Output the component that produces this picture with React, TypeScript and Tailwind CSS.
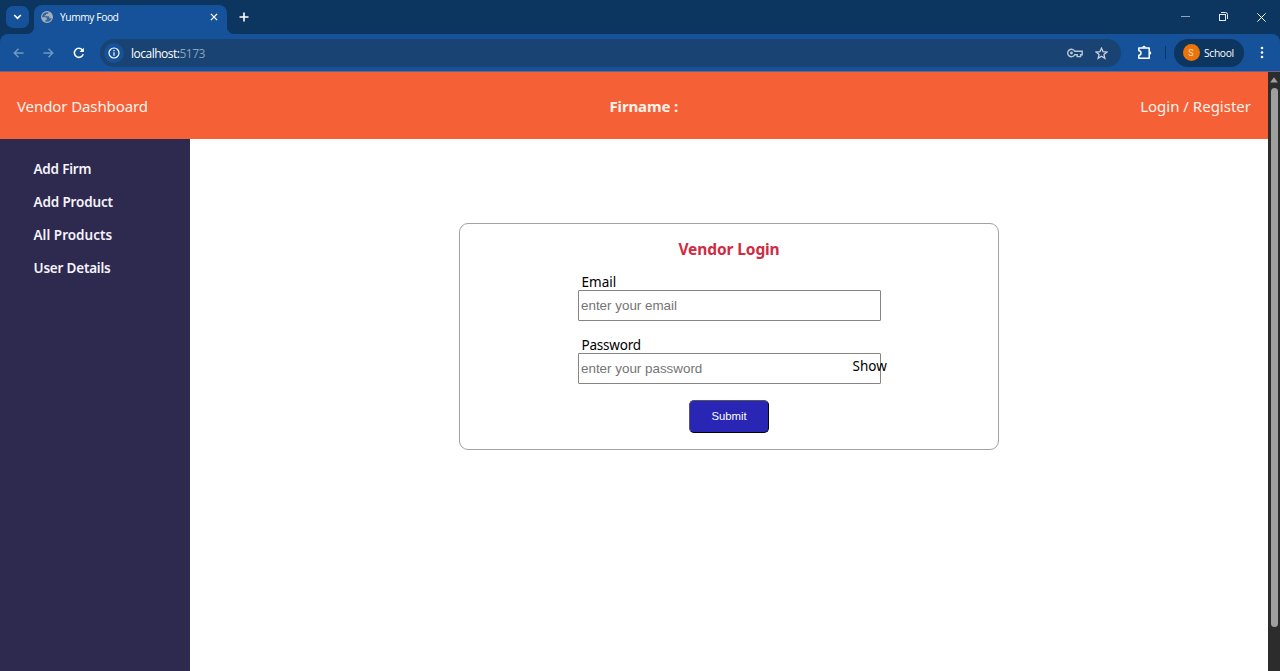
import React from "react";

const menuItems = [
  { label: "Add Firm", spacing: "tracking-[-0.2px]" },
  { label: "Add Product", spacing: "tracking-[-0.15px]" },
  { label: "All Products", spacing: "tracking-[0.02px]" },
  { label: "User Details", spacing: "tracking-[-0.2px]" },
];

function TitleBar() {
  return (
    <div className="flex h-[34px] shrink-0 items-start bg-[#0c3560] text-white">
      <div className="ml-[6px] mt-[6px] flex h-[22px] w-[23px] items-center justify-center rounded-[7px] bg-[#15529a]">
        <svg width="9" height="6" viewBox="0 0 9 6" fill="none" stroke="currentColor" strokeWidth="1.7">
          <path d="M1.2 1 4.5 4.3 7.8 1" />
        </svg>
      </div>
      <div className="relative ml-[5px] mt-[5px] flex h-[29px] w-[193px] items-center rounded-t-[8px] bg-[#15529a] pb-[5px]">
        <svg className="absolute -left-[7px] bottom-0" width="7" height="7" viewBox="0 0 7 7" fill="#15529a">
          <path d="M7 0A7 7 0 0 1 0 7H7Z" />
        </svg>
        <svg className="absolute -right-[7px] bottom-0" width="7" height="7" viewBox="0 0 7 7" fill="#15529a">
          <path d="M0 0A7 7 0 0 0 7 7H0Z" />
        </svg>
        <svg className="ml-[7px]" width="12" height="12" viewBox="0 0 12 12">
          <circle cx="6" cy="6" r="5.4" fill="#31669f" stroke="#a5afb9" strokeWidth="1.1" />
          <path d="M.7 6.2h3.2c1.3 0 2 .7 2 1.7v.8h-1.500v2.400C2.200 10.600.7 8.700.7 6.200ZM7.600.8v.8c0 .8-.7 1.400-1.500 1.400H5v1.200H3.800v1h3.300c.8 0 1.300.5 1.300 1.200v.9h2.700C11.800 4.300 10.200 1.500 7.600.8Z" fill="#a5afb9" />
        </svg>
        <span className="ml-[7px] grow whitespace-nowrap font-['Open_Sans','Noto_Sans',sans-serif] text-[10.3px] leading-4 tracking-[-0.45px]">Yummy Food</span>
        <svg className="mr-[9px]" width="8" height="8" viewBox="0 0 8 8" stroke="currentColor" strokeWidth="1.3">
          <path d="m.9.9 6.200 6.200M7.100.9.9 7.100" />
        </svg>
      </div>
      <svg className="ml-[12px] mt-[12px]" width="10" height="10" viewBox="0 0 10 10" stroke="currentColor" strokeWidth="1.6">
        <path d="M5 .5v9M.5 5h9" />
      </svg>
      <div className="ml-auto mr-[14px] mt-[12px] flex items-center">
        <svg width="9" height="9" viewBox="0 0 9 9" stroke="#91a6bd" strokeWidth="1">
          <path d="M0 3.500h9" />
        </svg>
        <svg className="ml-[28px]" width="10" height="10" viewBox="0 0 10 10" fill="none" stroke="#e2eaf2" strokeWidth="1">
          <rect x="1.500" y="2.500" width="6" height="6" />
          <path d="M3 .5H7.500a2 2 0 0 1 2 2v4.500" />
        </svg>
        <svg className="ml-[29px]" width="9" height="9" viewBox="0 0 9 9" stroke="currentColor" strokeWidth="1">
          <path d="m.4.4 8.200 8.200M8.600.4.4 8.600" />
        </svg>
      </div>
    </div>
  );
}

function Toolbar() {
  return (
    <div className="h-[38px] shrink-0 bg-[#0c3560]">
      <div className="flex h-full items-center rounded-t-[8px] border-b border-[#6f6485] bg-[#15529a] text-white">
        <svg className="ml-[13px]" width="11" height="10" viewBox="0 0 11 10" fill="none" stroke="#7398c4" strokeWidth="1.400">
          <path d="M10.500 5H1.200M5.500.7 1.200 5l4.300 4.300" />
        </svg>
        <svg className="ml-[19px]" width="11" height="10" viewBox="0 0 11 10" fill="none" stroke="#7398c4" strokeWidth="1.400">
          <path d="M.5 5h9.300M5.500.7 9.800 5 5.500 9.300" />
        </svg>
        <svg className="ml-[19px]" width="12" height="12" viewBox="0 0 12 12" fill="none">
          <path d="M10.200 7.200A4.500 4.500 0 1 1 9.300 2.900L10.500 4" stroke="currentColor" strokeWidth="1.500" />
          <path d="M10.800.7v4.300H6.500Z" fill="currentColor" />
        </svg>
        <div className="ml-[15px] flex h-[28px] w-[1021px] items-center rounded-full bg-[#194372] pl-[4px]">
          <div className="flex h-[20px] w-[20px] items-center justify-center rounded-full bg-[#15529a]">
            <svg width="12" height="12" viewBox="0 0 12 12" fill="none" stroke="currentColor" strokeWidth="1.200">
              <circle cx="6" cy="6" r="5" />
              <path d="M6 5.300v3.400M6 3v1.300" />
            </svg>
          </div>
          <span className="ml-[7px] mt-[2px] whitespace-nowrap font-['Open_Sans','Noto_Sans',sans-serif] text-[12px] leading-4 tracking-[-0.5px]">
            localhost:<span className="text-[#89a2bd]">5173</span>
          </span>
          <svg className="ml-auto mt-px" width="16" height="10" viewBox="0 0 16 10" fill="none" stroke="#b9c7d7" strokeWidth="1.400">
            <path d="M7.700 3.300A3.700 3.700 0 1 0 7.700 6.700H10.200V8.600H13.600V6.700H15.200V3.300Z" />
            <circle cx="4.500" cy="5" r="1.400" fill="#b9c7d7" stroke="none" />
          </svg>
          <svg className="ml-[12px] mr-[13px] mt-px" width="13" height="13" viewBox="0 0 13 13" fill="none" stroke="#c7d3e0" strokeWidth="1.300">
            <path d="m6.500 1.200 1.550 3.500 3.800.35-2.900 2.500.9 3.750-3.350-2-3.350 2 .9-3.750-2.900-2.500 3.800-.35Z" />
          </svg>
        </div>
        <svg className="ml-[16px]" width="15" height="15" viewBox="0 0 15 15" fill="none" stroke="currentColor" strokeWidth="1.500">
          <path d="M1.800 2.900h10.400v10.300H1.800V10.200a2.200 2.200 0 0 0 0-4.400Z" strokeLinejoin="round" />
          <path d="M5.200 2.600a1.800 1.800 0 0 1 3.600 0ZM12.500 6.200a1.800 1.800 0 0 1 0 3.600Z" fill="currentColor" stroke="none" />
        </svg>
        <div className="ml-[13px] h-[13px] w-px bg-[#0c3560]" />
        <div className="ml-[8px] flex h-[28px] w-[70px] items-center rounded-full bg-[#0c3560] pl-[8.500px]">
          <div className="flex h-[17px] w-[17px] shrink-0 items-center justify-center rounded-full bg-[#ec7409] pt-px font-['Roboto',sans-serif] text-[9px] leading-none text-[#f8dcc0]">S</div>
          <span className="ml-[4.500px] font-['Open_Sans','Noto_Sans',sans-serif] text-[10.300px] font-medium leading-4 tracking-[-0.35px]">School</span>
        </div>
        <svg className="ml-[16px]" width="4" height="13" viewBox="0 0 4 13" fill="currentColor">
          <circle cx="2" cy="2" r="1.300" />
          <circle cx="2" cy="6.500" r="1.300" />
          <circle cx="2" cy="11" r="1.300" />
        </svg>
      </div>
    </div>
  );
}

function LoginForm() {
  return (
    <form
      onSubmit={(event) => event.preventDefault()}
      className="ml-[269px] mt-[84px] flex h-[227px] w-[540px] flex-col items-center rounded-[9px] border border-[#a2a2a2] bg-white"
    >
      <h3 className="mt-[13px] text-[15.500px] font-bold leading-6 tracking-[-0.1px] text-[#cf2c43]">Vendor Login</h3>
      <div className="mt-[11px] w-[302px]">
        <label htmlFor="email" className="block pl-[3.500px] pt-[2px] text-[13.500px] leading-[16px]">Email</label>
        <input
          id="email"
          type="text"
          placeholder="enter your email"
          className="block h-[31px] w-[303px] rounded-[1px] border border-[#858585] pl-[2px] font-['Liberation_Sans',sans-serif] text-[13.400px] placeholder:text-[#757575]"
        />
      </div>
      <div className="relative mt-[14px] w-[302px]">
        <label htmlFor="password" className="block pl-[3.500px] pt-[2px] text-[13.500px] leading-[16px] tracking-[-0.2px]">Password</label>
        <input
          id="password"
          type="password"
          placeholder="enter your password"
          className="block h-[31px] w-[303px] rounded-[1px] border border-[#858585] pl-[2px] font-['Liberation_Sans',sans-serif] text-[13.400px] placeholder:text-[#757575]"
        />
        <span className="absolute left-[274.500px] top-[22px] text-[13.500px] leading-[18px]">Show</span>
      </div>
      <button className="mt-[16px] h-[33px] w-[80px] rounded-[5px] border border-b-[#000] border-l-[#555568] border-r-[#000] border-t-[#555568] bg-[#2926b5] font-['Liberation_Sans',sans-serif] text-[11.300px] text-white">Submit</button>
    </form>
  );
}

export default function App() {
  return (
    <div className="flex h-[671px] w-[1280px] flex-col overflow-hidden bg-white font-['Noto_Sans',sans-serif] text-black">
      <TitleBar />
      <Toolbar />
      <div className="flex min-h-0 grow">
        <div className="flex w-[1268px] flex-col">
          <header className="grid h-[67px] shrink-0 grid-cols-[592.500px_100px_1fr] items-center bg-[#f56036] px-[17px] text-[15px] leading-6 text-[#fff3ec]">
            <span className="tracking-[-0.1px]">Vendor Dashboard</span>
            <span className="whitespace-nowrap font-bold tracking-[-0.15px]">Firname :</span>
            <span className="text-right">Login / Register</span>
          </header>
          <div className="flex min-h-0 grow">
            <nav className="w-[190px] shrink-0 bg-[#2e294e] pl-[33.500px] pt-[14px]">
              <ul>
                {menuItems.map((item) => (
                  <li key={item.label} className="flex h-[32.800px] items-center text-[13.500px] font-semibold text-[#f5f3fa]">
                    <span className={item.spacing}>{item.label}</span>
                  </li>
                ))}
              </ul>
            </nav>
            <main className="grow">
              <LoginForm />
            </main>
          </div>
        </div>
        <div className="flex w-[12px] flex-col items-center bg-[#2c2c2c] pt-[5px]">
          <svg width="8" height="6" viewBox="0 0 8 6" fill="#9f9f9f">
            <path d="M4 .3 7.800 5.500H.2Z" />
          </svg>
          <div className="mt-[5px] h-[539px] w-[7px] rounded-full bg-[#9f9f9f]" />
        </div>
      </div>
    </div>
  );
}
